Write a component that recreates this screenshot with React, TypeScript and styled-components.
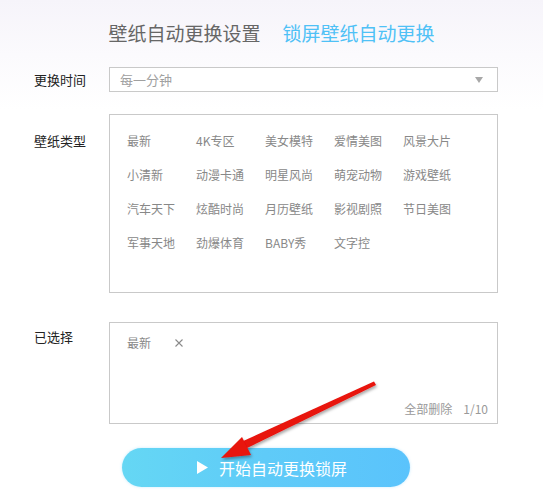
import React from "react";
import styled, { createGlobalStyle } from "styled-components";

const GlobalStyle = createGlobalStyle`
  html, body {
    margin: 0;
    padding: 0;
    background: #ffffff;
  }
  body {
    font-family: "Noto Sans CJK SC", "Liberation Sans", sans-serif;
  }
`;

const categories = [
  "最新", "4K专区", "美女模特", "爱情美图", "风景大片",
  "小清新", "动漫卡通", "明星风尚", "萌宠动物", "游戏壁纸",
  "汽车天下", "炫酷时尚", "月历壁纸", "影视剧照", "节日美图",
  "军事天地", "劲爆体育", "BABY秀", "文字控",
];

const App = () => {
  return (
    <>
      <GlobalStyle />
      <Page>
        <Header>
          <Tab>壁纸自动更换设置</Tab>
          <Tab $active>锁屏壁纸自动更换</Tab>
        </Header>

        <Form>
          <Row $gap={22}>
            <Label $top={0}>更换时间</Label>
            <Select>
              <SelectText>每一分钟</SelectText>
              <Caret />
            </Select>
          </Row>

          <Row $gap={29}>
            <Label $top={14}>壁纸类型</Label>
            <TypeBox>
              {categories.map((c) => (
                <TypeItem key={c}>{c}</TypeItem>
              ))}
            </TypeBox>
          </Row>

          <Row $gap={24}>
            <Label $top={2}>已选择</Label>
            <SelectedBox>
              <Tag>
                <span>最新</span>
                <svg width="8" height="8" viewBox="0 0 8 8">
                  <path d="M0.5 0.5 L7.5 7.5 M7.5 0.5 L0.5 7.5" stroke="#8a8a8a" strokeWidth="1.1" />
                </svg>
              </Tag>
              <Footer>
                <span>全部删除</span>
                <span>1/10</span>
              </Footer>
            </SelectedBox>
          </Row>

          <StartButton>
            <svg width="11" height="13" viewBox="0 0 11 13">
              <path d="M0 0 L11 6.5 L0 13 Z" fill="#ffffff" />
            </svg>
            <span>开始自动更换锁屏</span>
          </StartButton>
        </Form>

        <Arrow width="543" height="492" viewBox="0 0 543 492">
          <defs>
            <filter id="sh" x="-20%" y="-20%" width="140%" height="140%">
              <feDropShadow dx="1" dy="2" stdDeviation="1.5" floodColor="#000" floodOpacity="0.35" />
            </filter>
          </defs>
          <g filter="url(#sh)" fill="#e8120c">
            <path d="M374 381.5 L376 385 L245 449 L241 442 Z" />
            <path d="M221 458 L242 437 L251 455 Z" />
          </g>
        </Arrow>
      </Page>
    </>
  );
};

export default App;

const Page = styled.div`
  position: relative;
  width: 543px;
  height: 492px;
  overflow: hidden;
  background: linear-gradient(180deg, #f6f4fa 0px, #fbfafd 55px, #ffffff 110px);
`;

const Header = styled.div`
  display: flex;
  justify-content: center;
  gap: 22px;
  padding: 20px 0 0 0;
  height: 47px;
  box-sizing: border-box;
`;

const Tab = styled.div<{ $active?: boolean }>`
  font-size: 19px;
  line-height: 26px;
  color: ${({ $active }) => ($active ? "#4fc1f6" : "#666666")};
`;

const Form = styled.div`
  display: flex;
  flex-direction: column;
  padding: 20px 0 0 34px;
`;

const Row = styled.div<{ $gap: number }>`
  display: flex;
  align-items: flex-start;
  margin-bottom: ${({ $gap }) => $gap}px;
`;

const Label = styled.div<{ $top: number }>`
  width: 75px;
  flex-shrink: 0;
  font-size: 13px;
  line-height: 25px;
  color: #222222;
  padding-top: ${({ $top }) => $top}px;
`;

const Select = styled.div`
  width: 389px;
  height: 25px;
  box-sizing: border-box;
  border: 1px solid #c9c9c9;
  background: #ffffff;
  display: flex;
  align-items: center;
  justify-content: space-between;
  padding: 0 14px 0 10px;
`;

const SelectText = styled.span`
  font-size: 13px;
  color: #a0a0a0;
`;

const Caret = styled.span`
  width: 0;
  height: 0;
  border-left: 4.5px solid transparent;
  border-right: 4.5px solid transparent;
  border-top: 6px solid #a8a8a8;
`;

const TypeBox = styled.div`
  width: 389px;
  height: 179px;
  box-sizing: border-box;
  border: 1px solid #c9c9c9;
  background: rgba(255, 255, 255, 0.6);
  display: grid;
  grid-template-columns: repeat(5, 69px);
  grid-auto-rows: 18px;
  row-gap: 16px;
  align-content: start;
  padding: 17px 0 0 17px;
`;

const TypeItem = styled.div`
  font-size: 12px;
  line-height: 18px;
  color: #888888;
  white-space: nowrap;
`;

const SelectedBox = styled.div`
  width: 389px;
  height: 102px;
  box-sizing: border-box;
  border: 1px solid #c9c9c9;
  display: flex;
  flex-direction: column;
  justify-content: space-between;
  padding: 11px 9px 5px 17px;
`;

const Tag = styled.div`
  display: flex;
  align-items: center;
  gap: 24px;
  font-size: 12px;
  line-height: 18px;
  color: #888888;
`;

const Footer = styled.div`
  display: flex;
  justify-content: flex-end;
  gap: 11px;
  font-size: 12px;
  line-height: 18px;
  color: #999999;
`;

const StartButton = styled.div`
  margin-left: 88px;
  width: 288px;
  height: 39px;
  border-radius: 20px;
  background: linear-gradient(90deg, #65d7f4 0%, #5fcbf8 50%, #5ac3fc 100%);
  box-shadow: 0 0 3px rgba(90, 195, 252, 0.35);
  display: flex;
  align-items: center;
  justify-content: center;
  gap: 11px;
  padding-left: 12px;
  box-sizing: border-box;
  color: #ffffff;
  font-size: 16px;
`;

const Arrow = styled.svg`
  position: absolute;
  left: 0;
  top: 0;
  pointer-events: none;
`;
